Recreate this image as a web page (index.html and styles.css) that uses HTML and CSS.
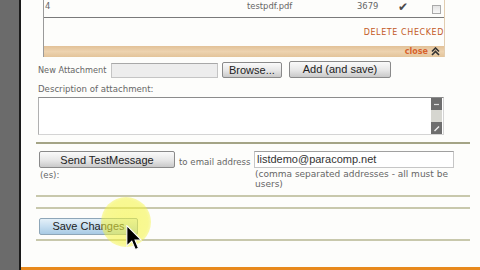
FILE: index.html
```html
<!DOCTYPE html>
<html>
<head>
<meta charset="utf-8">
<link rel="stylesheet" href="styles.css">
</head>
<body>
<div class="screen">
  <div class="side"></div>
  <div class="page">
    <div class="content">
      <div class="attach-box">
        <div class="file-row">
          <span>4</span>
          <span>testpdf.pdf</span>
          <span>3679</span>
          <span class="check">&#10004;</span>
          <span><span class="cbox"></span></span>
        </div>
        <div class="delete-area">DELETE CHECKED</div>
        <div class="close-bar">
          <span class="close">close</span>
          <svg class="close-icon" width="9" height="9" viewBox="0 0 9 9"><path d="M1 4.5 L4.5 1 L8 4.5 M1 8 L4.5 4.5 L8 8" fill="none" stroke="#333" stroke-width="1.6"/></svg>
        </div>
      </div>

      <div class="new-row">
        <span class="label">New Attachment</span>
        <span class="file-input"></span>
        <span class="btn browse">Browse...</span>
        <span class="btn add">Add (and save)</span>
      </div>

      <div class="desc-label label">Description of attachment:</div>
      <div class="textarea">
        <div class="scroll">
          <div class="sb-btn"><svg width="9" height="9" viewBox="0 0 9 9"><path d="M2 4.5 H7" stroke="#ddd" stroke-width="1.2"/></svg></div>
          <div class="sb-track"></div>
          <div class="sb-btn"><svg width="9" height="9" viewBox="0 0 9 9"><path d="M2.5 7 L7 2.5" stroke="#eee" stroke-width="1.4"/></svg></div>
        </div>
      </div>

      <div class="rule rule-dark"></div>

      <div class="send-row">
        <div class="send-left">
          <div class="send-line">
            <span class="btn send">Send TestMessage</span>
            <span class="label to">to email address</span>
          </div>
          <div class="label es">(es):</div>
        </div>
        <div class="send-right">
          <div class="email">listdemo@paracomp.net</div>
          <div class="label hint">(comma separated addresses - all must be users)</div>
        </div>
      </div>

      <div class="rule rule-a"></div>
      <div class="rule rule-b"></div>

      <div class="save-row">
        <span class="btn save">Save Changes</span>
      </div>

      <div class="rule rule-c"></div>
    </div>
    <div class="footer"></div>
  </div>
  <div class="highlight"></div>
  <svg class="cursor" width="16" height="26" viewBox="0 0 12 20"><path d="M0.5 0.5 L0.5 16 L4.3 12.4 L7 18.8 L9.4 17.8 L6.8 11.6 L11.6 11.6 Z" fill="#000" stroke="#fff" stroke-width="0.8"/></svg>
</div>
</body>
</html>
```

FILE: styles.css
```css
* { box-sizing: border-box; }
html, body { margin: 0; padding: 0; }
body { background: #fdfdfb; font-family: "DejaVu Sans", Verdana, sans-serif; }

.screen {
  position: relative;
  width: 480px;
  height: 270px;
  overflow: hidden;
  display: flex;
}
.side {
  width: 21px;
  background: #6b6b6b;
  border-right: 2px solid #1a1a1a;
}
.page {
  flex: 1;
  display: flex;
  flex-direction: column;
  background: #fdfdfb;
}
.content { flex: 1; }
.footer { height: 3px; background: #e8891c; }

.label { font-size: 8.6px; color: #666; }

/* attachments box */
.attach-box {
  margin-left: 22px;
  width: 402px;
  border-left: 1px solid #9a9a9a;
  border-right: 1px solid #e2cdb0;
}
.file-row {
  height: 18px;
  display: grid;
  grid-template-columns: 202px 110px 41px 34px 1fr;
  align-items: start;
  padding-top: 1px;
  padding-left: 1px;
  font-size: 8.4px;
  color: #666;
  border-bottom: 1px solid #7a7a7a;
}
.check { font-size: 12px; color: #4a4a4a; line-height: 12px; margin-top: 0; }
.cbox {
  display: inline-block;
  width: 9px;
  height: 9px;
  margin-top: 4px;
  border: 1px solid #aaa;
  background: linear-gradient(#e4e4e4, #f8f8f8);
}
.delete-area {
  height: 28px;
  text-align: right;
  padding-top: 10px;
  font-size: 8px;
  letter-spacing: 0.6px;
  color: #c25a26;
  white-space: nowrap;
  overflow: hidden;
}
.close-bar {
  height: 11px;
  background: linear-gradient(#e2c197, #edd3b0 50%, #e3c49a);
  display: flex;
  justify-content: flex-end;
  align-items: center;
  gap: 3px;
  padding-right: 4px;
}
.close { font-size: 8px; font-weight: bold; color: #d8622a; }
.close-icon { display: block; }

/* new attachment row */
.new-row {
  margin-top: 5px;
  height: 16px;
  display: flex;
  align-items: center;
  padding-left: 17px;
}
.new-row .label { width: 73px; font-size: 8.2px; white-space: nowrap; }
.file-input {
  width: 107px;
  height: 15px;
  background: #ededed;
  border: 1px solid #c4c4c4;
  border-top-color: #a8a8a8;
}
.btn {
  display: inline-flex;
  align-items: center;
  justify-content: center;
  font-family: "Liberation Sans", Arial, sans-serif;
  font-size: 11px;
  color: #222;
  border: 1px solid #8a8a8a;
  border-radius: 2px;
  background: linear-gradient(#fafafa, #e6e6e6 55%, #c9c9c9);
  white-space: nowrap;
  overflow: hidden;
}
.browse { width: 60px; height: 16px; margin-left: 4px; padding-left: 6px; justify-content: flex-start; }
.add { width: 102px; height: 17px; margin-left: 7px; margin-top: -2px; }

.desc-label { margin-top: 5px; padding-left: 17px; height: 12px; line-height: 12px; }
.textarea {
  margin-top: 2px;
  margin-left: 17px;
  width: 406px;
  height: 38px;
  background: #fff;
  border: 1px solid #d4d4d4;
  border-top-color: #8c8c8c;
  border-left-color: #b0b0b0;
  display: flex;
  justify-content: flex-end;
}
.scroll { width: 11px; display: flex; flex-direction: column; margin-right: 1px; }
.sb-btn {
  height: 12px;
  background: #6e6e6e;
  display: flex;
  align-items: center;
  justify-content: center;
}
.sb-track { flex: 1; background: #d6d6d0; }

.rule { margin-left: 15px; width: 434px; height: 2px; }
.rule-dark { margin-top: 7px; background: #a4a486; }
.rule-a { margin-top: 2px; background: #c8c8ac; }
.rule-b { margin-top: 10px; background: #c8c8ac; }
.rule-c { margin-top: 7px; background: #c8c8ac; }

/* send row */
.send-row {
  margin-top: 7px;
  display: flex;
  padding-left: 18px;
  height: 42px;
}
.send-left { width: 215px; }
.send-line { display: flex; align-items: flex-end; height: 17px; }
.send { width: 136px; height: 17px; }
.to { margin-left: 4px; line-height: 12px; }
.es { margin-top: 2px; line-height: 10px; padding-left: 1px; }
.send-right { width: 200px; }
.email {
  height: 17px;
  border: 1px solid #c6c6c6;
  border-top-color: #a0a0a0;
  background: #fff;
  font-family: "Liberation Sans", Arial, sans-serif;
  font-size: 11px;
  color: #333;
  line-height: 15px;
  padding-left: 2px;
}
.hint { margin-top: 1px; padding-left: 1px; line-height: 10px; font-size: 9px; }

.save-row { margin-top: 6px; padding-left: 18px; height: 17px; }
.save {
  width: 99px;
  height: 17px;
  border-color: #8ea6b8;
  background: linear-gradient(#e4f0f8, #c6def0 50%, #a8cae4);
}

/* overlay: click highlight + pointer */
.highlight {
  position: absolute;
  left: 101px;
  top: 197px;
  width: 50px;
  height: 50px;
  border-radius: 50%;
  background: radial-gradient(circle, rgba(244,244,60,0.6) 0%, rgba(244,244,60,0.55) 62%, rgba(244,244,60,0) 100%);
}
.cursor { position: absolute; left: 126px; top: 225px; }
```
